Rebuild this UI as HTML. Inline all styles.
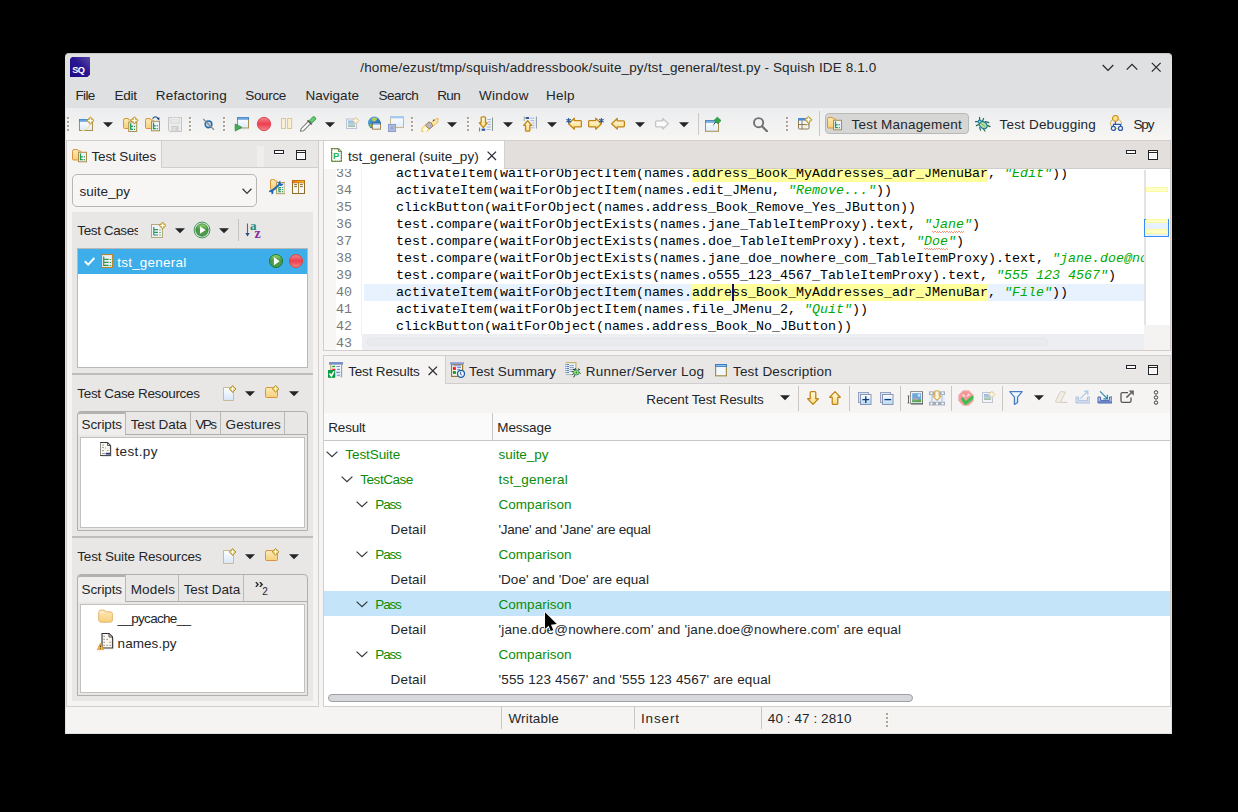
<!DOCTYPE html>
<html><head><meta charset="utf-8"><title>Squish IDE</title><style>
html,body{margin:0;padding:0;background:#000;}
body{width:1238px;height:812px;position:relative;overflow:hidden;font-family:"Liberation Sans",sans-serif;font-size:13.5px;color:#232629;}
div,svg{position:absolute;box-sizing:border-box;}
.t{white-space:pre;}
</style></head><body>
<svg width="0" height="0" style="position:absolute"><defs>
<linearGradient id="gFold" x1="0" y1="0" x2="0" y2="1"><stop offset="0" stop-color="#fdeab8"/><stop offset="1" stop-color="#f7cf7a"/></linearGradient>
<linearGradient id="gFoldH" x1="0" y1="0" x2="1" y2="0"><stop offset="0" stop-color="#fbd98c"/><stop offset="1" stop-color="#fdf0cc"/></linearGradient>
<linearGradient id="gWin" x1="0" y1="0" x2="0" y2="1"><stop offset="0" stop-color="#ffffff"/><stop offset="1" stop-color="#dcecfb"/></linearGradient>
<linearGradient id="gArr" x1="0" y1="0" x2="0" y2="1"><stop offset="0" stop-color="#fffbe6"/><stop offset="1" stop-color="#fbdc7c"/></linearGradient>
<linearGradient id="gRed" x1="0" y1="0" x2="0" y2="1"><stop offset="0" stop-color="#ee8c8c"/><stop offset="0.5" stop-color="#f03c50"/><stop offset="1" stop-color="#ee8888"/></linearGradient>
<linearGradient id="gGrn" x1="0" y1="0" x2="0" y2="1"><stop offset="0" stop-color="#9ad86a"/><stop offset="0.45" stop-color="#4a9a4a"/><stop offset="1" stop-color="#4c9c4c"/></linearGradient>
<linearGradient id="gSq" x1="0" y1="0" x2="0" y2="1"><stop offset="0" stop-color="#ffffff"/><stop offset="1" stop-color="#b4daf4"/></linearGradient>
<linearGradient id="gSqLogo" x1="0" y1="1" x2="1" y2="0"><stop offset="0" stop-color="#1c0a86"/><stop offset="0.55" stop-color="#2a1690"/><stop offset="1" stop-color="#5a4aa8"/></linearGradient>
<linearGradient id="gTbl" x1="0" y1="0" x2="1" y2="0"><stop offset="0" stop-color="#f08000"/><stop offset="1" stop-color="#ffc820"/></linearGradient>
<linearGradient id="gDoc" x1="0" y1="0" x2="0" y2="1"><stop offset="0" stop-color="#ffffff"/><stop offset="1" stop-color="#d6e6f8"/></linearGradient>
<linearGradient id="gGlobe" x1="0" y1="0" x2="1" y2="1"><stop offset="0" stop-color="#5ab0e0"/><stop offset="1" stop-color="#1a5a9a"/></linearGradient>
<linearGradient id="gImg" x1="0" y1="0" x2="0" y2="1"><stop offset="0" stop-color="#7aa8e0"/><stop offset="0.6" stop-color="#a8c8d8"/><stop offset="1" stop-color="#8ab078"/></linearGradient>
</defs></svg>
<div style="left:65px;top:53px;width:1107px;height:681px;background:#dee0e2;border-radius:4px 4px 0 0;border-top:1px solid #c3c5c7;"></div>
<svg style="left:70px;top:57px;" width="20" height="20" viewBox="0 0 20 20"><path d="M2 0H20V17.5L17.5 20H0V2Z" fill="url(#gSqLogo)"/><text x="2.2" y="16.2" font-family="Liberation Sans" font-weight="bold" font-size="9.2" fill="#fff" letter-spacing="-.5">SQ</text></svg>
<div class="t" style="left:360.3px;top:57.52px;line-height:20px;font-size:13.5px;color:#232629;letter-spacing:0.135px;">/home/ezust/tmp/squish/addressbook/suite_py/tst_general/test.py - Squish IDE 8.1.0</div>
<svg style="left:1102px;top:61.6px;" width="12" height="12" viewBox="0 0 12 12"><path d="M0.7 3L6 8.3L11.3 3" fill="none" stroke="#232629" stroke-width="1.2"/></svg>
<svg style="left:1126px;top:60.8px;" width="12" height="12" viewBox="0 0 12 12"><path d="M0.7 8.6L6 3.3L11.3 8.6" fill="none" stroke="#232629" stroke-width="1.2"/></svg>
<svg style="left:1150px;top:61px;" width="12" height="12" viewBox="0 0 12 12"><path d="M1.8 1.8L10.6 10.6M10.6 1.8L1.8 10.6" fill="none" stroke="#232629" stroke-width="1.2"/></svg>
<div class="t" style="left:75.4px;top:86.02px;line-height:20px;font-size:13.5px;color:#232629;letter-spacing:-0.622px;">File</div>
<div class="t" style="left:114.6px;top:86.02px;line-height:20px;font-size:13.5px;color:#232629;letter-spacing:-0.289px;">Edit</div>
<div class="t" style="left:155.8px;top:86.02px;line-height:20px;font-size:13.5px;color:#232629;letter-spacing:0.185px;">Refactoring</div>
<div class="t" style="left:245.3px;top:86.02px;line-height:20px;font-size:13.5px;color:#232629;letter-spacing:-0.356px;">Source</div>
<div class="t" style="left:305.4px;top:86.02px;line-height:20px;font-size:13.5px;color:#232629;letter-spacing:0.043px;">Navigate</div>
<div class="t" style="left:378.4px;top:86.02px;line-height:20px;font-size:13.5px;color:#232629;letter-spacing:-0.496px;">Search</div>
<div class="t" style="left:437.2px;top:86.02px;line-height:20px;font-size:13.5px;color:#232629;letter-spacing:-0.583px;">Run</div>
<div class="t" style="left:479px;top:86.02px;line-height:20px;font-size:13.5px;color:#232629;letter-spacing:0.277px;">Window</div>
<div class="t" style="left:546px;top:86.02px;line-height:20px;font-size:13.5px;color:#232629;letter-spacing:0.278px;">Help</div>
<div style="left:66px;top:108px;width:1105px;height:625px;background:#f5f4f3;"></div>
<div style="left:66px;top:108px;width:1105px;height:32px;background:linear-gradient(#ecedef,#f7f6f4);"></div>
<div style="left:66px;top:140px;width:1105px;height:1px;background:#d2ccc7;"></div>
<div style="left:67px;top:117px;width:2px;height:2px;background:#ada294;box-shadow:1px 1px 0 #fbfaf9;"></div>
<div style="left:67px;top:121px;width:2px;height:2px;background:#ada294;box-shadow:1px 1px 0 #fbfaf9;"></div>
<div style="left:67px;top:125px;width:2px;height:2px;background:#ada294;box-shadow:1px 1px 0 #fbfaf9;"></div>
<div style="left:67px;top:129px;width:2px;height:2px;background:#ada294;box-shadow:1px 1px 0 #fbfaf9;"></div>
<svg style="left:78px;top:116px;" width="16" height="16" viewBox="0 0 16 16"><g opacity="1"><rect x="1.5" y="3.5" width="13" height="11" fill="url(#gWin)" stroke="#a88e50" stroke-width="1"/><rect x="1" y="3" width="14" height="2.6" fill="#3d86cf"/><rect x="2" y="3.8" width="12" height="0.8" fill="#9cc8f0" opacity=".8"/></g><path d="M4 14.3Q11 14 12.2 7" fill="none" stroke="#f4e2a8" stroke-width="1.3"/><g opacity="1"><path d="M12.4 0.9999999999999996L16.0 4.6L12.4 8.2L8.8 4.6Z" fill="#dcc05c" stroke="#b8962a" stroke-width="1" stroke-linejoin="round"/><path d="M12.4 2.3V6.8999999999999995M10.100000000000001 4.6H14.7" stroke="#fffef4" stroke-width="1.05"/></g></svg>
<svg style="left:103px;top:122px;" width="10" height="6" viewBox="0 0 10 6"><path d="M0 0.2h10l-5 5z" fill="#232629"/></svg>
<svg style="left:123px;top:116px;" width="16" height="16" viewBox="0 0 16 16"><path d="M0.5 4.2Q0.5 2.5 2 2.5H4.95Q5.58 2.5 6.12 4H7.8Q8.5 4 8.5 5V11.5Q8.5 12.5 7.5 12.5H1.5Q0.5 12.5 0.5 11.5Z" fill="url(#gFold)" stroke="#d9953c" stroke-width="1"/><rect x="5.7" y="6.0" width="8" height="9.5" fill="#eef2fa" stroke="#a8904a" stroke-width="1"/><path d="M7.7 7.3V13.4H10.0M7.7 10.45H10.0" fill="none" stroke="#1e9a4e" stroke-width="1.25"/><rect x="10.899999999999999" y="9.85" width="1.2" height="1.2" fill="#1e9a4e"/><rect x="10.899999999999999" y="12.8" width="1.2" height="1.2" fill="#1e9a4e"/><g opacity="1"><path d="M11.4 0.8000000000000003L15.0 4.4L11.4 8.0L7.800000000000001 4.4Z" fill="#dcc05c" stroke="#b8962a" stroke-width="1" stroke-linejoin="round"/><path d="M11.4 2.1000000000000005V6.7M9.100000000000001 4.4H13.7" stroke="#fffef4" stroke-width="1.05"/></g></svg>
<svg style="left:145px;top:116px;" width="16" height="16" viewBox="0 0 16 16"><path d="M0.5 4.2Q0.5 2.5 2 2.5H4.95Q5.58 2.5 6.12 4H7.8Q8.5 4 8.5 5V11.5Q8.5 12.5 7.5 12.5H1.5Q0.5 12.5 0.5 11.5Z" fill="url(#gFold)" stroke="#d9953c" stroke-width="1"/><rect x="6.5" y="5.3" width="8" height="9.5" fill="#eef2fa" stroke="#a8904a" stroke-width="1"/><path d="M8.5 6.6V12.700000000000001H10.8M8.5 9.75H10.8" fill="none" stroke="#1e9a4e" stroke-width="1.25"/><rect x="11.7" y="9.15" width="1.2" height="1.2" fill="#1e9a4e"/><rect x="11.7" y="12.100000000000001" width="1.2" height="1.2" fill="#1e9a4e"/><path d="M7.6 2.6Q10.5 -.8 13.2 2.6" fill="none" stroke="#2a5a98" stroke-width="1.3"/><path d="M11.6 2.2L14.6 1.4L14.2 4.4Z" fill="#1c3e7a"/></svg>
<svg style="left:167px;top:116px;" width="16" height="16" viewBox="0 0 16 16"><path d="M1.5 1.5H14.5V15.5H2.5L1.5 14.5Z" fill="#ececec" stroke="#c4c4c4" stroke-width="1" stroke-linejoin="round"/><rect x="4" y="1.5" width="8" height="5.5" fill="#f6f6f6" stroke="#cccccc" stroke-width=".8"/><path d="M5.2 3.3H10.8M5.2 5H10.8" stroke="#d4d4d4" stroke-width=".8"/><rect x="5" y="10.5" width="6" height="5" fill="#e0e0e0" stroke="#c4c4c4" stroke-width=".8"/><rect x="8.6" y="11.6" width="1.2" height="3" fill="#c8c8c8"/></svg>
<div style="left:189px;top:117px;width:2px;height:2px;background:#ada294;box-shadow:1px 1px 0 #fbfaf9;"></div>
<div style="left:189px;top:121px;width:2px;height:2px;background:#ada294;box-shadow:1px 1px 0 #fbfaf9;"></div>
<div style="left:189px;top:125px;width:2px;height:2px;background:#ada294;box-shadow:1px 1px 0 #fbfaf9;"></div>
<div style="left:189px;top:129px;width:2px;height:2px;background:#ada294;box-shadow:1px 1px 0 #fbfaf9;"></div>
<svg style="left:201px;top:116px;" width="16" height="16" viewBox="0 0 16 16"><circle cx="7.5" cy="8.3" r="3.3" fill="#c4d8ea" stroke="#1e6eae" stroke-width="1.6"/><path d="M2.2 3L13 13.8" stroke="#8c8c8c" stroke-width="1.3"/></svg>
<div style="left:223px;top:117px;width:2px;height:2px;background:#ada294;box-shadow:1px 1px 0 #fbfaf9;"></div>
<div style="left:223px;top:121px;width:2px;height:2px;background:#ada294;box-shadow:1px 1px 0 #fbfaf9;"></div>
<div style="left:223px;top:125px;width:2px;height:2px;background:#ada294;box-shadow:1px 1px 0 #fbfaf9;"></div>
<div style="left:223px;top:129px;width:2px;height:2px;background:#ada294;box-shadow:1px 1px 0 #fbfaf9;"></div>
<svg style="left:234px;top:116px;" width="16" height="16" viewBox="0 0 16 16"><g opacity="1"><rect x="3.5" y="1.5" width="11" height="10.5" fill="url(#gWin)" stroke="#a88e50" stroke-width="1"/><rect x="3" y="1" width="12" height="2.6" fill="#3d86cf"/><rect x="4" y="1.8" width="10" height="0.8" fill="#9cc8f0" opacity=".8"/></g><path d="M3.5 12.6H14" stroke="#c9c9c9" stroke-width=".8"/><path d="M1.2 8L8 11.4L1.2 15Z" fill="#4aa85a" stroke="#2e8a44" stroke-width=".8" stroke-linejoin="round"/></svg>
<svg style="left:256px;top:116px;" width="16" height="16" viewBox="0 0 16 16"><circle cx="8" cy="8" r="6.7" fill="url(#gRed)" stroke="#de4452" stroke-width="0.9"/></svg>
<svg style="left:279px;top:116px;" width="16" height="16" viewBox="0 0 16 16"><rect x="2.5" y="2.5" width="4" height="10" fill="#fbf0d2" stroke="#d9c794" stroke-width="1"/><rect x="8.6" y="2.5" width="4" height="10" fill="#fbf0d2" stroke="#d9c794" stroke-width="1"/></svg>
<svg style="left:299px;top:116px;" width="18" height="16" viewBox="0 0 18 16"><path d="M1.4 15.2L2.2 12.6L9.6 5.2L11.8 7.4L4.4 14.8Z" fill="#fff" stroke="#7e7e7e" stroke-width="1.1" stroke-linejoin="round"/><path d="M8.6 4.2L12.8 8.4" stroke="#5a5a5a" stroke-width="1.6"/><path d="M10.4 4.6L13.4 1.2Q15 -.2 16.2 1.4Q17.4 2.8 16 4.2L12.8 7Z" fill="#62cc6e" stroke="#3c9a4c" stroke-width=".9"/></svg>
<svg style="left:325px;top:122px;" width="10" height="6" viewBox="0 0 10 6"><path d="M0 0.2h10l-5 5z" fill="#232629"/></svg>
<svg style="left:345px;top:116px;" width="16" height="16" viewBox="0 0 16 16"><g opacity=".75"><rect x="1.5" y="3" width="10" height="9.5" fill="#f2f4f8" stroke="#aab4c8" stroke-width="1"/><rect x="3" y="4.5" width="7" height="6.5" fill="url(#gImg)"/></g><g opacity="0.9"><path d="M10.8 1.1999999999999997L14.200000000000001 4.6L10.8 8.0L7.4 4.6Z" fill="#eadcae" stroke="#e0cf9c" stroke-width="1" stroke-linejoin="round"/><path d="M10.8 2.5V6.7M8.700000000000001 4.6H12.9" stroke="#fffef4" stroke-width="1.05"/></g></svg>
<svg style="left:367px;top:116px;" width="16" height="16" viewBox="0 0 16 16"><circle cx="7.2" cy="6.8" r="6.2" fill="url(#gGlobe)"/><path d="M5 2.2Q8 .8 10.4 2.6Q9.4 5.2 6.8 5.6Q4.6 5.2 5 2.2Z" fill="#b8c85a"/><path d="M2.4 8Q4.2 7.4 5 9.6Q4.4 11.6 3.2 11Z" fill="#8ab85a"/><g opacity="1"><rect x="5.5" y="6.7" width="8" height="6.5" fill="url(#gWin)" stroke="#a88a4a" stroke-width="1"/><rect x="5" y="6.2" width="9" height="2.2" fill="#2c6cb4"/><rect x="6" y="7.0" width="7" height="0.8" fill="#9cc8f0" opacity=".8"/></g></svg>
<svg style="left:388px;top:116px;" width="16" height="16" viewBox="0 0 16 16"><rect x="2.5" y="0.5" width="13" height="11" fill="url(#gWin)" stroke="#cdb885" stroke-width="1"/><rect x="2" y="0" width="14" height="2.4" fill="#a8caec"/><rect x="0.5" y="8.5" width="7" height="7" fill="#b4bedc" stroke="#8a9ccc" stroke-width="1"/><rect x="2.4" y="10.4" width="3.2" height="3.2" fill="#9aa8cc"/></svg>
<div style="left:411px;top:117px;width:2px;height:2px;background:#ada294;box-shadow:1px 1px 0 #fbfaf9;"></div>
<div style="left:411px;top:121px;width:2px;height:2px;background:#ada294;box-shadow:1px 1px 0 #fbfaf9;"></div>
<div style="left:411px;top:125px;width:2px;height:2px;background:#ada294;box-shadow:1px 1px 0 #fbfaf9;"></div>
<div style="left:411px;top:129px;width:2px;height:2px;background:#ada294;box-shadow:1px 1px 0 #fbfaf9;"></div>
<svg style="left:421px;top:116px;" width="18" height="16" viewBox="0 0 18 16"><path d="M0.9 12.4L4.8 8.6L8.6 13L5 16H0.9Z" fill="#fff6b8" stroke="#f0b030" stroke-width=".8" stroke-linejoin="round"/><path d="M2.6 15.4L6.6 12.4L5.2 15.8Z" fill="#fff"/><path d="M3.4 14.6L7 11.4" stroke="#fff" stroke-width="2"/><path d="M8.8 8.2L13.6 3.4L17 2.2L16.8 5.8L12 10.8Z" fill="#fde79c" stroke="#f0a030" stroke-width="1" stroke-linejoin="round" stroke-dasharray="1.1 .5"/><circle cx="12.7" cy="4.3" r=".9" fill="#2a5ab0"/><rect x="5.4" y="6.6" width="5.8" height="5.6" rx="1.6" transform="rotate(42 8.3 9.4)" fill="#b9b4c6" stroke="#9a7838" stroke-width=".9"/></svg>
<svg style="left:447px;top:122px;" width="10" height="6" viewBox="0 0 10 6"><path d="M0 0.2h10l-5 5z" fill="#232629"/></svg>
<div style="left:467px;top:117px;width:2px;height:2px;background:#ada294;box-shadow:1px 1px 0 #fbfaf9;"></div>
<div style="left:467px;top:121px;width:2px;height:2px;background:#ada294;box-shadow:1px 1px 0 #fbfaf9;"></div>
<div style="left:467px;top:125px;width:2px;height:2px;background:#ada294;box-shadow:1px 1px 0 #fbfaf9;"></div>
<div style="left:467px;top:129px;width:2px;height:2px;background:#ada294;box-shadow:1px 1px 0 #fbfaf9;"></div>
<svg style="left:478px;top:116px;" width="16" height="16" viewBox="0 0 16 16"><path d="M9.4 3.5H13M10 6H13M10 8.5H13M8.6 11H13M8.6 13.5H13" stroke="#a8b4dc" stroke-width="1"/><path d="M14.5 1.5V15" stroke="#8a9a8a" stroke-width="1"/><path d="M1.6 11.5V15.5" stroke="#5a78b8" stroke-width="1"/><rect x="3.6" y="12.6" width="3.6" height="2.2" fill="#2a5aa8"/><path d="M5.3 11.6L1.2999999999999998 6.799999999999999H3.1380000000000003V1.8Q3.1380000000000003 0.8 4.138 0.8H6.462Q7.462 0.8 7.462 1.8V6.799999999999999H9.3Z" fill="url(#gArr)" stroke="#c0861a" stroke-width="1.3" stroke-linejoin="round" opacity="1"/></svg>
<svg style="left:503px;top:122px;" width="10" height="6" viewBox="0 0 10 6"><path d="M0 0.2h10l-5 5z" fill="#232629"/></svg>
<svg style="left:522px;top:116px;" width="16" height="16" viewBox="0 0 16 16"><path d="M7.6 2.2H12.4M8.6 4.6H12.4M10.4 7H12.4M10.4 9.4H12.4M8.6 11.8H12.4" stroke="#a8b4dc" stroke-width="1"/><path d="M14.4 0.5V12.6" stroke="#8a9aaa" stroke-width="1"/><path d="M2.2 0.5V5" stroke="#9aa88a" stroke-width="1"/><rect x="3.6" y="1" width="3.4" height="2" fill="#2a5aa8"/><path d="M5.7 4.8L1.7 9.42H3.5380000000000003V14.200000000000001Q3.5380000000000003 15.200000000000001 4.538 15.200000000000001H6.862Q7.862 15.200000000000001 7.862 14.200000000000001V9.42H9.700000000000001Z" fill="url(#gArr)" stroke="#c0861a" stroke-width="1.3" stroke-linejoin="round" opacity="1"/></svg>
<svg style="left:547px;top:122px;" width="10" height="6" viewBox="0 0 10 6"><path d="M0 0.2h10l-5 5z" fill="#232629"/></svg>
<svg style="left:566px;top:116px;" width="16" height="16" viewBox="0 0 16 16"><path d="M2.6 7.800000000000001L8.3 2.3V4.7H14.4Q15.4 4.7 15.4 5.7V9.9Q15.4 10.9 14.4 10.9H8.3V13.3Z" fill="url(#gArr)" stroke="#c0861a" stroke-width="1.3" stroke-linejoin="round"/><path d="M2.6 1.9999999999999996V7.199999999999999M0.3999999999999999 3.1999999999999997L4.800000000000001 6.0M0.3999999999999999 6.0L4.800000000000001 3.1999999999999997" stroke="#2c5e9e" stroke-width="1.1"/></svg>
<svg style="left:588px;top:116px;" width="16" height="16" viewBox="0 0 16 16"><path d="M13.4 7.800000000000001L7.7 2.3V4.7H1.6Q0.6 4.7 0.6 5.7V9.9Q0.6 10.9 1.6 10.9H7.7V13.3Z" fill="url(#gArr)" stroke="#c0861a" stroke-width="1.3" stroke-linejoin="round"/><path d="M13.4 1.9999999999999996V7.199999999999999M11.2 3.1999999999999997L15.600000000000001 6.0M11.2 6.0L15.600000000000001 3.1999999999999997" stroke="#2c5e9e" stroke-width="1.1"/></svg>
<svg style="left:610px;top:116px;" width="16" height="16" viewBox="0 0 16 16"><path d="M1.6 7.8L7.3 2.5V4.8H13.4Q14.4 4.8 14.4 5.8V9.8Q14.4 10.8 13.4 10.8H7.3V13.100000000000001Z" fill="url(#gArr)" stroke="#c0861a" stroke-width="1.3" stroke-linejoin="round"/></svg>
<svg style="left:635px;top:122px;" width="10" height="6" viewBox="0 0 10 6"><path d="M0 0.2h10l-5 5z" fill="#232629"/></svg>
<svg style="left:654px;top:116px;" width="16" height="16" viewBox="0 0 16 16"><path d="M14.4 7.8L8.7 2.5V4.8H2.6Q1.6 4.8 1.6 5.8V9.8Q1.6 10.8 2.6 10.8H8.7V13.100000000000001Z" fill="#fbfbfb" stroke="#c4c4c4" stroke-width="1.3" stroke-linejoin="round"/></svg>
<svg style="left:679px;top:122px;" width="10" height="6" viewBox="0 0 10 6"><path d="M0 0.2h10l-5 5z" fill="#232629"/></svg>
<div style="left:698px;top:113px;width:1px;height:22px;background:#c9c8c7;"></div>
<svg style="left:705px;top:116px;" width="16" height="16" viewBox="0 0 16 16"><g opacity="1"><rect x="0.5" y="4.7" width="13" height="10.6" fill="url(#gWin)" stroke="#a88e50" stroke-width="1"/><rect x="0" y="4.2" width="14" height="2.4" fill="#3d86cf"/><rect x="1" y="5.0" width="12" height="0.8" fill="#9cc8f0" opacity=".8"/></g><path d="M8.6 8.6L10.6 6.2" stroke="#333" stroke-width="1"/><path d="M9.2 4.2L12.4 1.2L16 4.6L12.8 7.8Z" fill="#2fa84a" stroke="#1c8a3a" stroke-width=".8" stroke-linejoin="round"/><path d="M8.4 10.4Q8 9 9 8.4" stroke="#a8c8e8" stroke-width="1" fill="none"/></svg>
<svg style="left:752px;top:116px;" width="16" height="16" viewBox="0 0 16 16"><circle cx="6.6" cy="6.7" r="4.6" fill="none" stroke="#707070" stroke-width="1.9"/><path d="M10 10.2L15 15.2" stroke="#707070" stroke-width="2.2" stroke-linecap="round"/></svg>
<div style="left:786px;top:117px;width:2px;height:2px;background:#ada294;box-shadow:1px 1px 0 #fbfaf9;"></div>
<div style="left:786px;top:121px;width:2px;height:2px;background:#ada294;box-shadow:1px 1px 0 #fbfaf9;"></div>
<div style="left:786px;top:125px;width:2px;height:2px;background:#ada294;box-shadow:1px 1px 0 #fbfaf9;"></div>
<div style="left:786px;top:129px;width:2px;height:2px;background:#ada294;box-shadow:1px 1px 0 #fbfaf9;"></div>
<svg style="left:797px;top:116px;" width="16" height="16" viewBox="0 0 16 16"><rect x="1.5" y="2.5" width="10.5" height="10.5" fill="#f4f6fa" stroke="#8a7a4a" stroke-width="1" rx="1"/><rect x="1" y="2" width="11.5" height="2.6" fill="#4a8ad0"/><path d="M5 4.6V13M1.5 8.6H12" stroke="#8a7a4a" stroke-width="1"/><path d="M6.5 11.6L10.6 8.4" stroke="#f4e2a8" stroke-width="1"/><g opacity="1"><path d="M11.4 0.2999999999999998L14.9 3.8L11.4 7.3L7.9 3.8Z" fill="#dcc05c" stroke="#b8962a" stroke-width="1" stroke-linejoin="round"/><path d="M11.4 1.5999999999999999V6.0M9.200000000000001 3.8H13.6" stroke="#fffef4" stroke-width="1.05"/></g></svg>
<div style="left:819px;top:111px;width:1px;height:25px;background:#c9c8c7;"></div>
<div style="left:825px;top:113px;width:144px;height:21px;background:#d6d6d5;border:1px solid #b9b9b8;border-radius:4px;"></div>
<svg style="left:827px;top:116px;" width="16" height="16" viewBox="0 0 16 16"><path d="M0.5 3.2Q0.5 1.5 2 1.5H5.2250000000000005Q5.89 1.5 6.460000000000001 3H8.3Q9.0 3 9.0 4V11.0Q9.0 12.0 8.0 12.0H1.5Q0.5 12.0 0.5 11.0Z" fill="url(#gFold)" stroke="#d9953c" stroke-width="1"/><rect x="6.5" y="4.3" width="8" height="9.5" fill="#eef2fa" stroke="#a8904a" stroke-width="1"/><path d="M8.5 5.6V11.700000000000001H10.8M8.5 8.75H10.8" fill="none" stroke="#1e9a4e" stroke-width="1.25"/><rect x="11.7" y="8.15" width="1.2" height="1.2" fill="#1e9a4e"/><rect x="11.7" y="11.100000000000001" width="1.2" height="1.2" fill="#1e9a4e"/></svg>
<div class="t" style="left:851.6px;top:115.02px;line-height:20px;font-size:13.5px;color:#232629;letter-spacing:0.199px;">Test Management</div>
<svg style="left:975px;top:116px;" width="16" height="16" viewBox="0 0 16 16"><g stroke="#1e6e4e" stroke-width="1.2" stroke-linecap="round"><path d="M4.6 1.4V4.4M8.6 2.6L7.6 4.8M0.4 5.7H3.4M1.4 9.6L3.6 8.6M4.6 11.6L5.6 14.2M8.6 13.2L10 15M10.6 5.6L13.8 6.6M12.6 9.4L15 10.6"/></g><ellipse cx="8.2" cy="9" rx="4.3" ry="3.2" transform="rotate(38 8.2 9)" fill="#b4dc9c" stroke="#1a7a9e" stroke-width="1.3"/><circle cx="4.7" cy="5.6" r="1.5" fill="#d8f0c0" stroke="#1a7a9e" stroke-width="1.1"/><path d="M6.4 7.6L10 10.6" stroke="#7ab86a" stroke-width="1"/></svg>
<div class="t" style="left:999.5px;top:115.02px;line-height:20px;font-size:13.5px;color:#232629;letter-spacing:0.190px;">Test Debugging</div>
<svg style="left:1109px;top:115px;" width="16" height="17" viewBox="0 0 16 17"><path d="M3.4 4.4Q-.4 8 3 11.8M9.4 4.4Q14.4 7 11.6 11.6" fill="none" stroke="#c8a83c" stroke-width=".9"/><path d="M4.4 13.4H10.6" stroke="#e8c84a" stroke-width="1"/><circle cx="6.4" cy="3.4" r="2.9" fill="#fde08a" stroke="#c8981c" stroke-width="1.2"/><path d="M6.4 6.8V9.4M4.4 11.4V9.4H11.5V11.4" fill="none" stroke="#2a5aa8" stroke-width="1.2"/><circle cx="4.4" cy="13.4" r="2" fill="#fff" stroke="#2a5aa8" stroke-width="1.3"/><circle cx="11.5" cy="13.4" r="2" fill="#fff" stroke="#2a5aa8" stroke-width="1.3"/></svg>
<div class="t" style="left:1133.4px;top:115.02px;line-height:20px;font-size:13.5px;color:#232629;letter-spacing:-1.033px;">Spy</div>
<div style="left:66px;top:140px;width:253px;height:567px;background:#f5f4f3;border:1px solid #d3cecb;"></div>
<div style="left:161px;top:141px;width:157px;height:27px;background:#e8e7e6;border-bottom:1px solid #d3cecb;border-left:1px solid #d3cecb;"></div>
<div style="left:257px;top:146px;width:7px;height:21px;background:#efeeed;"></div>
<svg style="left:72px;top:148px;" width="16" height="16" viewBox="0 0 16 16"><path d="M0.5 3.2Q0.5 1.5 2 1.5H5.2250000000000005Q5.89 1.5 6.460000000000001 3H8.3Q9.0 3 9.0 4V11.0Q9.0 12.0 8.0 12.0H1.5Q0.5 12.0 0.5 11.0Z" fill="url(#gFold)" stroke="#d9953c" stroke-width="1"/><rect x="6.5" y="4.3" width="8" height="9.5" fill="#eef2fa" stroke="#a8904a" stroke-width="1"/><path d="M8.5 5.6V11.700000000000001H10.8M8.5 8.75H10.8" fill="none" stroke="#1e9a4e" stroke-width="1.25"/><rect x="11.7" y="8.15" width="1.2" height="1.2" fill="#1e9a4e"/><rect x="11.7" y="11.100000000000001" width="1.2" height="1.2" fill="#1e9a4e"/></svg>
<div class="t" style="left:91.4px;top:146.92px;line-height:20px;font-size:13.5px;color:#232629;letter-spacing:-0.123px;">Test Suites</div>
<svg style="left:274px;top:150px;" width="10" height="5" viewBox="0 0 10 5"><rect x="-1" y="-1" width="12" height="6" fill="#fff" opacity=".6" rx="1"/><rect x="0.5" y="0.5" width="9" height="3" fill="#fff" stroke="#1f2226" stroke-width="1"/></svg>
<svg style="left:296px;top:150px;" width="10" height="10" viewBox="0 0 10 10"><rect x="-1" y="-1" width="12" height="12" fill="#fff" opacity=".6" rx="1"/><rect x="0.5" y="0.5" width="9" height="9" fill="none" stroke="#1f2226" stroke-width="1"/><rect x="1" y="1" width="8" height="1" fill="#fff"/><rect x="1" y="2" width="8" height="1" fill="#1f2226"/><rect x="1.5" y="3.5" width="7" height="5" fill="none" stroke="#fff" stroke-width="1"/></svg>
<div style="left:72px;top:174px;width:185px;height:33px;background:#f7f6f5;border:1px solid #b8b6b4;border-radius:5px;"></div>
<div class="t" style="left:79.4px;top:182.42px;line-height:20px;font-size:13.5px;color:#232629;letter-spacing:0.043px;">suite_py</div>
<svg style="left:242px;top:188px;" width="10" height="7" viewBox="0 0 10 7"><path d="M0.6 0.8L5 5.4L9.4 0.8" fill="none" stroke="#34383c" stroke-width="1.3"/></svg>
<svg style="left:269px;top:179px;" width="16" height="16" viewBox="0 0 16 16"><path d="M1.5 2.0Q1.5 0.3 3 0.3H5.18Q5.712 0.3 6.168 1.8H7.3999999999999995Q8.1 1.8 8.1 2.8V9.3Q8.1 10.3 7.1 10.3H2.5Q1.5 10.3 1.5 9.3Z" fill="url(#gFold)" stroke="#d9953c" stroke-width="1"/><rect x="7.6" y="3.5" width="8.4" height="11.2" fill="#eef2fa" stroke="#b09a5c" stroke-width="1"/><path d="M9.9 8V13.2M9.9 8.6H12.2M9.9 10.6H12.2M9.9 12.7H12.2" fill="none" stroke="#2a9a5a" stroke-width="1.1"/><path d="M13.7 8V9.1M13.7 10V11.1M13.7 12.1V13.2" stroke="#2a9a5a" stroke-width="1.1"/><path d="M2.6 12.2L11.2 4.8" stroke="#2468b4" stroke-width="2"/><path d="M9.4 5.2Q8.8 2.6 11.6 1.8L11.2 3.6L12.6 4.9L14.4 4.2Q14.2 6.8 11.4 6.9Z" fill="#2468b4"/><path d="M4.4 12.4Q5 15 2.4 15.8L2.8 14L1.4 12.8L-.2 13.4Q0 10.8 2.6 10.6Z" fill="#2468b4"/></svg>
<svg style="left:292px;top:179px;" width="13" height="16" viewBox="0 0 13 16"><rect x="0.5" y="1.7" width="12" height="12.8" fill="#f4f8fc" stroke="#8a6e28" stroke-width="1"/><rect x="0.3" y="1.5" width="12.4" height="2.4" fill="url(#gTbl)" stroke="#b05a10" stroke-width=".6"/><path d="M6.5 4V14.5" stroke="#a88a3a" stroke-width="1"/><path d="M2.2 5.6H5M2.2 7.6H5M8 5.6H10.8M8 7.6H10.8" stroke="#8a6e28" stroke-width="1"/></svg>
<div style="left:72px;top:212px;width:241px;height:489px;background:#e8e7e6;"></div>
<div class="t" style="left:77.3px;top:221.02px;line-height:20px;font-size:13.5px;color:#232629;letter-spacing:-0.387px;width:60.4px;overflow:hidden;">Test Cases</div>
<svg style="left:150px;top:222px;" width="16" height="16" viewBox="0 0 16 16"><rect x="1.5" y="2.5" width="11" height="13" fill="#f0f2f8" stroke="#b8a878" stroke-width="1"/><path d="M3.8 5V13H8M3.8 7.6H8M3.8 10.3H8" fill="none" stroke="#2a9a5a" stroke-width="1.2"/><path d="M10 7.6V8.6M10 10V11M10 12.6V13.4" stroke="#2a9a5a" stroke-width="1.2"/><g opacity="1"><path d="M12.6 0.10000000000000009L16.0 3.5L12.6 6.9L9.2 3.5Z" fill="#dcc05c" stroke="#b8962a" stroke-width="1" stroke-linejoin="round"/><path d="M12.6 1.4000000000000001V5.6000000000000005M10.5 3.5H14.7" stroke="#fffef4" stroke-width="1.05"/></g></svg>
<svg style="left:175px;top:228px;" width="10" height="6" viewBox="0 0 10 6"><path d="M0 0.2h10l-5 5z" fill="#232629"/></svg>
<svg style="left:193px;top:221px;" width="18" height="18" viewBox="0 0 18 18"><circle cx="9" cy="9" r="7.9" fill="#eef6ee" stroke="#2e8a44" stroke-width="0.9"/><circle cx="9" cy="9" r="6.2" fill="url(#gGrn)" stroke="#2a7a3a" stroke-width=".8"/><path d="M7 5.2V12.8L12.6 9Z" fill="#fff"/></svg>
<svg style="left:219px;top:228px;" width="10" height="6" viewBox="0 0 10 6"><path d="M0 0.2h10l-5 5z" fill="#232629"/></svg>
<div style="left:238px;top:219px;width:1px;height:22px;background:#c4c3c2;"></div>
<svg style="left:245px;top:222px;" width="17" height="16" viewBox="0 0 17 16"><path d="M2.5 1.5V13" stroke="#3a6ea8" stroke-width="1.1"/><path d="M0.3 11L2.5 14.4L4.7 11Z" fill="#2a4e88"/><text x="5" y="7.8" font-family="Liberation Serif" font-weight="bold" font-size="13" fill="#1a8a7a">a</text><text x="9.6" y="15.9" font-family="Liberation Serif" font-weight="bold" font-size="14" fill="#8a2a9a">z</text></svg>
<div style="left:77px;top:248px;width:231px;height:120px;background:#fff;border:1px solid #b9b8b7;"></div>
<div style="left:78px;top:249px;width:229px;height:25px;background:#3daee9;"></div>
<svg style="left:84px;top:257px;" width="11" height="9" viewBox="0 0 11 9"><path d="M0.8 4.2L4.2 7.6L10.4 1" fill="none" stroke="#fff" stroke-width="2"/></svg>
<svg style="left:101px;top:254px;" width="12" height="14" viewBox="0 0 12 14"><rect x="0.5" y="0.5" width="11" height="13" fill="#eef0f8" stroke="#b8882c" stroke-width="1.2"/><path d="M2.7 2.4V11.4H7.6M2.7 5.4H7.6M2.7 8.3H7.6" fill="none" stroke="#2a9a4a" stroke-width="1.2"/><path d="M9.3 5V6M9.3 7.9V8.9M9.3 10.9V11.9" stroke="#2a9a4a" stroke-width="1.2"/></svg>
<div class="t" style="left:117.2px;top:252.72px;line-height:20px;font-size:13.5px;color:#fff;letter-spacing:0.230px;">tst_general</div>
<svg style="left:269px;top:254px;" width="14" height="14" viewBox="0 0 14 14"><circle cx="7" cy="7" r="6.5" fill="url(#gGrn)" stroke="#1f7a30" stroke-width="1"/><path d="M4.9 2.9V11.3L10.6 7.3Z" fill="#fff"/></svg>
<svg style="left:289px;top:254px;" width="14" height="14" viewBox="0 0 14 14"><circle cx="7" cy="7" r="6.5" fill="url(#gRed)" stroke="#e2402e" stroke-width="0.9"/></svg>
<div style="left:72px;top:373.2px;width:241px;height:1.5px;background:#bebdbc;"></div>
<div class="t" style="left:77.3px;top:384.02px;line-height:20px;font-size:13.5px;color:#232629;letter-spacing:-0.312px;">Test Case Resources</div>
<svg style="left:223px;top:385px;" width="14" height="16" viewBox="0 0 14 16"><path d="M0.5 2.5H8L10.5 5V15.5H0.5Z" fill="url(#gDoc)" stroke="#c8bc98" stroke-width="1"/><g opacity="1"><path d="M9.6 0.6000000000000001L13.0 4L9.6 7.4L6.199999999999999 4Z" fill="#dcc05c" stroke="#b8962a" stroke-width="1" stroke-linejoin="round"/><path d="M9.6 1.9000000000000001V6.1000000000000005M7.499999999999999 4H11.7" stroke="#fffef4" stroke-width="1.05"/></g></svg>
<svg style="left:245.2px;top:391px;" width="10" height="6" viewBox="0 0 10 6"><path d="M0 0.2h10l-5 5z" fill="#232629"/></svg>
<svg style="left:265px;top:385px;" width="14" height="16" viewBox="0 0 14 16"><path d="M0.5 4.2Q0.5 2.5 2 2.5H7.15Q8.06 2.5 8.84 4H11.8Q12.5 4 12.5 5V11.5Q12.5 12.5 11.5 12.5H1.5Q0.5 12.5 0.5 11.5Z" fill="url(#gFold)" stroke="#d9953c" stroke-width="1"/><g opacity="1"><path d="M10.6 0.3999999999999999L14.0 3.8L10.6 7.199999999999999L7.199999999999999 3.8Z" fill="#dcc05c" stroke="#b8962a" stroke-width="1" stroke-linejoin="round"/><path d="M10.6 1.7V5.8999999999999995M8.5 3.8H12.7" stroke="#fffef4" stroke-width="1.05"/></g></svg>
<svg style="left:289px;top:391px;" width="10" height="6" viewBox="0 0 10 6"><path d="M0 0.2h10l-5 5z" fill="#232629"/></svg>
<div style="left:77px;top:411px;width:231px;height:119.5px;background:#e8e7e6;border:1px solid #b0afae;border-radius:4px 4px 0 0;"></div>
<div style="left:78px;top:412px;width:48px;height:23px;background:#efeeed;border-top:2px solid #b3b2b1;border-right:1px solid #b9b8b7;border-radius:3px 0 0 0;"></div>
<div class="t" style="left:81.6px;top:415.02px;line-height:20px;font-size:13.5px;color:#232629;letter-spacing:-0.144px;">Scripts</div>
<div style="left:190px;top:412px;width:1px;height:22px;background:#b9b8b7;"></div>
<div class="t" style="left:130.7px;top:415.02px;line-height:20px;font-size:13.5px;color:#232629;letter-spacing:-0.116px;">Test Data</div>
<div style="left:220px;top:412px;width:1px;height:22px;background:#b9b8b7;"></div>
<div class="t" style="left:195.5px;top:415.02px;line-height:20px;font-size:13.5px;color:#232629;letter-spacing:-1.683px;">VPs</div>
<div style="left:284px;top:412px;width:1px;height:22px;background:#b9b8b7;"></div>
<div class="t" style="left:225.6px;top:415.02px;line-height:20px;font-size:13.5px;color:#232629;letter-spacing:0.060px;">Gestures</div>
<div style="left:126px;top:434px;width:181px;height:1px;background:#b0afae;"></div>
<div style="left:80px;top:437px;width:225px;height:91.0px;background:#fff;border:1px solid #c2c1c0;"></div>
<svg style="left:100px;top:442px;" width="12" height="15" viewBox="0 0 12 15"><path d="M0.5 0.5H7.5L10.5 3.5V13.5H0.5Z" fill="#fbf8f2" stroke="none"/><path d="M0.5 13.5V0.5" fill="none" stroke="#8c8c8c" stroke-width="1"/><path d="M0.2 0.5H7.5L10.5 3.5V13.5H0.2" fill="none" stroke="#363636" stroke-width="1.1"/><path d="M7.5 0.5V3.5H10.5Z" fill="#d8d8d8" stroke="#3a3a3a" stroke-width=".8"/><path d="M2 3H4M2 5.6H4M5 6H6M2 8.6H4M7 8.6H8.5M2 11.6H6" stroke="#9a9a9a" stroke-width="1"/><rect x="6" y="10.8" width="4" height="1.8" fill="#2a3a8a"/><path d="M1.5 14.2H11.2V4" fill="none" stroke="#bbb" stroke-width=".8" opacity=".7"/></svg>
<div class="t" style="left:115.4px;top:441.62px;line-height:20px;font-size:13.5px;color:#232629;letter-spacing:0.386px;">test.py</div>
<div style="left:72px;top:536.2px;width:241px;height:1.5px;background:#bebdbc;"></div>
<div class="t" style="left:77.3px;top:546.82px;line-height:20px;font-size:13.5px;color:#232629;letter-spacing:-0.172px;">Test Suite Resources</div>
<svg style="left:223px;top:548px;" width="14" height="16" viewBox="0 0 14 16"><path d="M0.5 2.5H8L10.5 5V15.5H0.5Z" fill="url(#gDoc)" stroke="#c8bc98" stroke-width="1"/><g opacity="1"><path d="M9.6 0.6000000000000001L13.0 4L9.6 7.4L6.199999999999999 4Z" fill="#dcc05c" stroke="#b8962a" stroke-width="1" stroke-linejoin="round"/><path d="M9.6 1.9000000000000001V6.1000000000000005M7.499999999999999 4H11.7" stroke="#fffef4" stroke-width="1.05"/></g></svg>
<svg style="left:245.2px;top:554px;" width="10" height="6" viewBox="0 0 10 6"><path d="M0 0.2h10l-5 5z" fill="#232629"/></svg>
<svg style="left:265px;top:548px;" width="14" height="16" viewBox="0 0 14 16"><path d="M0.5 4.2Q0.5 2.5 2 2.5H7.15Q8.06 2.5 8.84 4H11.8Q12.5 4 12.5 5V11.5Q12.5 12.5 11.5 12.5H1.5Q0.5 12.5 0.5 11.5Z" fill="url(#gFold)" stroke="#d9953c" stroke-width="1"/><g opacity="1"><path d="M10.6 0.3999999999999999L14.0 3.8L10.6 7.199999999999999L7.199999999999999 3.8Z" fill="#dcc05c" stroke="#b8962a" stroke-width="1" stroke-linejoin="round"/><path d="M10.6 1.7V5.8999999999999995M8.5 3.8H12.7" stroke="#fffef4" stroke-width="1.05"/></g></svg>
<svg style="left:289px;top:554px;" width="10" height="6" viewBox="0 0 10 6"><path d="M0 0.2h10l-5 5z" fill="#232629"/></svg>
<div style="left:77px;top:574.4px;width:231px;height:121.6px;background:#e8e7e6;border:1px solid #b0afae;border-radius:4px 4px 0 0;"></div>
<div style="left:78px;top:575.4px;width:48px;height:27px;background:#efeeed;border-top:2px solid #b3b2b1;border-right:1px solid #b9b8b7;border-radius:3px 0 0 0;"></div>
<div class="t" style="left:81.6px;top:580.02px;line-height:20px;font-size:13.5px;color:#232629;letter-spacing:-0.144px;">Scripts</div>
<div style="left:178px;top:575.4px;width:1px;height:26px;background:#b9b8b7;"></div>
<div class="t" style="left:130.7px;top:580.02px;line-height:20px;font-size:13.5px;color:#232629;letter-spacing:0.154px;">Models</div>
<div style="left:243px;top:575.4px;width:1px;height:26px;background:#b9b8b7;"></div>
<div class="t" style="left:183.7px;top:580.02px;line-height:20px;font-size:13.5px;color:#232629;letter-spacing:-0.066px;">Test Data</div>
<div style="left:126px;top:601.4px;width:181px;height:1px;background:#b0afae;"></div>
<div style="left:80px;top:604.4px;width:225px;height:89.1px;background:#fff;border:1px solid #c2c1c0;"></div>
<svg style="left:255px;top:582px;" width="9" height="5" viewBox="0 0 9 5"><path d="M0.2 0H1.8L4 2.5L1.8 5H0.2L2 2.5Z M4.2 0H5.8L8.2 2.5L5.8 5H4.2L6 2.5Z" fill="#2a2e32"/></svg>
<div class="t" style="left:262.3px;top:582.44px;line-height:20px;font-size:10px;color:#232629;">2</div>
<svg style="left:97.5px;top:609.2px;" width="16" height="14" viewBox="0 0 16 14"><path d="M0.7 3.6Q0.7 1.1 3 1.1H6Q7.2 1.1 7.6 2.8H12.2Q14.4 2.8 14.4 5V11Q14.4 13.2 12.2 13.2H3Q.7 13.2 .7 11Z" fill="url(#gFold)" stroke="#e8b672" stroke-width="1"/><path d="M2 3.4H6.2" stroke="#fdf2d4" stroke-width="1.1"/></svg>
<div class="t" style="left:117.6px;top:609.02px;line-height:20px;font-size:13.5px;color:#232629;letter-spacing:-0.693px;">__pycache__</div>
<svg style="left:97px;top:633px;" width="17" height="18" viewBox="0 0 17 18"><g transform="translate(4.5,0)"><path d="M0.5 0.5H7.5L11 4V15H0.5Z" fill="#fbf6ee" stroke="#303030" stroke-width="1.1"/><path d="M7.5 0.5V4H11Z" fill="#e8e8e8" stroke="#303030" stroke-width=".8"/><path d="M2 3.4H3.2M2 6.4H3.2M5 6.4H6.2M2 9.4H3.2M8 9.4H9.2M2 12.4H3.2M5 12.4H6.2M8 12.4H9.2" stroke="#8a8a8a" stroke-width="1.2"/><path d="M1.5 15.7H11.7V5" fill="none" stroke="#999" stroke-width=".8" opacity=".7"/></g><path d="M3.4 10.4L6.6 16.6H0.3Z" fill="#f8c048" stroke="#e0982a" stroke-width=".9" stroke-linejoin="round"/><path d="M3.4 12.4V14.4M3.4 15.2V15.9" stroke="#4a3a1a" stroke-width="1"/></svg>
<div class="t" style="left:117.6px;top:634.02px;line-height:20px;font-size:13.5px;color:#232629;letter-spacing:0.053px;">names.py</div>
<div style="left:323px;top:140px;width:848px;height:211px;background:#fff;border:1px solid #d3cecb;"></div>
<div style="left:324px;top:141px;width:846px;height:27px;background:#e2dfdc;"></div>
<div style="left:324px;top:168px;width:846px;height:1px;background:#d0cecc;"></div>
<div style="left:324px;top:141px;width:180.5px;height:28px;background:#fff;border-right:1px solid #d4d0cc;"></div>
<svg style="left:331px;top:148px;" width="11" height="14" viewBox="0 0 11 14"><path d="M0.6 0.6H7.4L10.4 3.6V13.4H0.6Z" fill="#fff" stroke="#5e7e30" stroke-width="1.2" stroke-dasharray="1.6 .8"/><path d="M0.6 0.6H7.4L10.4 3.6V13.4H0.6Z" fill="none" stroke="#5e7e30" stroke-width="1.2" opacity=".55"/><path d="M7.4 0.8V3.6H10.2" fill="#f4c8c8" stroke="#5e7e30" stroke-width=".9"/><text x="2" y="11" font-family="Liberation Sans" font-weight="bold" font-size="9.5" fill="#1cb84c">P</text></svg>
<div class="t" style="left:347.9px;top:146.52px;line-height:20px;font-size:13.5px;color:#232629;letter-spacing:0.046px;">tst_general (suite_py)</div>
<svg style="left:487px;top:150.6px;" width="10" height="10" viewBox="0 0 10 10"><path d="M0.6 0.6L9 9M9 0.6L0.6 9" fill="none" stroke="#2a2e32" stroke-width="1.25"/></svg>
<svg style="left:1126px;top:150px;" width="10" height="5" viewBox="0 0 10 5"><rect x="-1" y="-1" width="12" height="6" fill="#fff" opacity=".6" rx="1"/><rect x="0.5" y="0.5" width="9" height="3" fill="#fff" stroke="#1f2226" stroke-width="1"/></svg>
<svg style="left:1148px;top:150px;" width="10" height="10" viewBox="0 0 10 10"><rect x="-1" y="-1" width="12" height="12" fill="#fff" opacity=".6" rx="1"/><rect x="0.5" y="0.5" width="9" height="9" fill="none" stroke="#1f2226" stroke-width="1"/><rect x="1" y="1" width="8" height="1" fill="#fff"/><rect x="1" y="2" width="8" height="1" fill="#1f2226"/><rect x="1.5" y="3.5" width="7" height="5" fill="none" stroke="#fff" stroke-width="1"/></svg>
<div style="left:324px;top:169px;width:12px;height:181px;background:#f7f6f5;"></div>
<div style="left:361px;top:169px;width:1px;height:166px;background:#f1f1f1;"></div>
<div style="left:336px;top:169px;width:808px;height:166px;overflow:hidden;" id="code">
<div style="left:28px;top:115.19999999999999px;width:780px;height:17px;background:#e8f2fe;"></div>
<div class="ln" style="top:-3.8px">33</div><div class="cl" style="top:-3.8px">    activateItem(waitForObjectItem(names.<span class="hl">address_Book_MyAddresses_adr_JMenuBar</span>, <span class="st">&quot;Edit&quot;</span>))</div>
<div class="ln" style="top:13.2px">34</div><div class="cl" style="top:13.2px">    activateItem(waitForObjectItem(names.edit_JMenu, <span class="st">&quot;Remove...&quot;</span>))</div>
<div class="ln" style="top:30.2px">35</div><div class="cl" style="top:30.2px">    clickButton(waitForObject(names.address_Book_Remove_Yes_JButton))</div>
<div class="ln" style="top:47.2px">36</div><div class="cl" style="top:47.2px">    test.compare(waitForObjectExists(names.jane_TableItemProxy).text, <span class="st">&quot;<span class="sq">Jane</span>&quot;</span>)</div>
<div class="ln" style="top:64.2px">37</div><div class="cl" style="top:64.2px">    test.compare(waitForObjectExists(names.doe_TableItemProxy).text, <span class="st">&quot;<span class="sq">Doe</span>&quot;</span>)</div>
<div class="ln" style="top:81.2px">38</div><div class="cl" style="top:81.2px">    test.compare(waitForObjectExists(names.jane_doe_nowhere_com_TableItemProxy).text, <span class="st">&quot;jane.doe@nowhere.com&quot;</span>)</div>
<div class="ln" style="top:98.2px">39</div><div class="cl" style="top:98.2px">    test.compare(waitForObjectExists(names.o555_123_4567_TableItemProxy).text, <span class="st">&quot;555 123 4567&quot;</span>)</div>
<div class="ln" style="top:115.2px">40</div><div class="cl" style="top:115.2px">    activateItem(waitForObjectItem(names.<span class="hl">address_Book_MyAddresses_adr_JMenuBar</span>, <span class="st">&quot;File&quot;</span>))</div>
<div class="ln" style="top:132.2px">41</div><div class="cl" style="top:132.2px">    activateItem(waitForObjectItem(names.file_JMenu_2, <span class="st">&quot;Quit&quot;</span>))</div>
<div class="ln" style="top:149.2px">42</div><div class="cl" style="top:149.2px">    clickButton(waitForObject(names.address_Book_No_JButton))</div>
<div class="ln" style="top:166.2px">43</div><div class="cl" style="top:166.2px"></div>
<div style="left:396px;top:115.19999999999999px;width:2px;height:17px;background:#10106a;"></div>
</div>
<style>
.ln{left:0;width:15.6px;text-align:right;font:13.33px/17px "Liberation Mono",monospace;color:#787878;height:17px;}
.cl{left:28.1px;font:13.33px/17px "Liberation Mono",monospace;color:#000;white-space:pre;height:17px;}
.cl span{position:static}
.hl{background:#ffff9c;display:inline-block;height:17px;}
.st{color:#00aa00;font-style:italic;}
.sq{padding-bottom:1px;background:repeating-linear-gradient(90deg,#f29a7c 0 1.2px,transparent 1.2px 2.4px) 0 calc(100% - 1px)/100% 1px no-repeat,repeating-linear-gradient(90deg,transparent 0 1.2px,#f29a7c 1.2px 2.4px) 0 100%/100% 1px no-repeat;}
</style>
<div class="ln" style="left:336px;top:335.2px">43</div>
<div style="left:362px;top:334px;width:782px;height:16px;background:#eceef1;"></div>
<div style="left:367px;top:338px;width:681px;height:8px;background:#e9ebee;border-radius:4px;border:1px solid #e4e6ea;"></div>
<div style="left:1144px;top:325px;width:26px;height:25px;background:#f4f3f1;"></div>
<div style="left:1144px;top:170px;width:2px;height:155px;background:#e3e3e3;"></div>
<div style="left:1146px;top:187px;width:22px;height:5px;background:#ffffc8;border:1px solid #fdf9a0;"></div>
<div style="left:1144px;top:219px;width:25px;height:18px;background:#e8f2fe;border:1px solid #3b8cf0;"></div>
<div style="left:1146px;top:219px;width:22px;height:4px;background:#ffffc8;border:1px solid #fdf9a0;"></div>
<div style="left:1146px;top:229px;width:22px;height:5px;background:#ffffc8;border:1px solid #fdf9a0;"></div>
<div style="left:323px;top:355px;width:848px;height:352px;background:#fff;border:1px solid #d3cecb;"></div>
<div style="left:324px;top:356px;width:846px;height:27px;background:#e8e7e6;"></div>
<div style="left:324px;top:383px;width:846px;height:1px;background:#d0cecc;"></div>
<div style="left:324px;top:356px;width:122px;height:28px;background:#f5f4f3;border-right:1px solid #d3cecb;"></div>
<div style="left:324px;top:384px;width:846px;height:29px;background:#f5f4f3;"></div>
<svg style="left:328px;top:362px;" width="16" height="17" viewBox="0 0 16 17"><rect x="2.6" y="2.4" width="11.2" height="12.2" fill="url(#gDoc)"/><path d="M2.8 2.4V11M13.6 2.4V14.6H12.6" fill="none" stroke="#b4a264" stroke-width="1.1"/><rect x="1" y="0" width="14" height="2.7" fill="#7b90c8"/><path d="M4.2 4.5H7" stroke="#0aa80a" stroke-width="1.3"/><path d="M4.2 7.4H7.4" stroke="#ff1a1a" stroke-width="1.3"/><path d="M8.2 4.5H12M9 7.4H12M8.2 10.4H12M9 13.3H12" stroke="#7a90c8" stroke-width="1.1"/><rect x="0" y="8" width="7.2" height="7.8" fill="#0a9c44"/><path d="M1.5 11.6L3.4 14L6 9.4" fill="none" stroke="#fff" stroke-width="1.6"/></svg>
<div class="t" style="left:348.2px;top:361.62px;line-height:20px;font-size:13.5px;color:#232629;letter-spacing:-0.176px;">Test Results</div>
<svg style="left:428px;top:366px;" width="10" height="10" viewBox="0 0 10 10"><path d="M0.6 0.6L9 9M9 0.6L0.6 9" fill="none" stroke="#2a2e32" stroke-width="1.25"/></svg>
<svg style="left:450px;top:362px;" width="16" height="16" viewBox="0 0 16 16"><rect x="1.6" y="2.4" width="11" height="12" fill="#f4f6fc" stroke="#9a7a2a" stroke-width="1.2"/><rect x="0" y="0.2" width="14" height="2.2" fill="#8c9fd2"/><path d="M3.4 3.8H11M7.2 5.6H11M7.2 7.6H10" stroke="#6a80c0" stroke-width="1"/><rect x="3" y="5.1" width="2.9" height="2.8" fill="#ff1414"/><rect x="3" y="9.1" width="2.9" height="2.8" fill="#0aa00a"/><circle cx="11" cy="11.8" r="3.5" fill="#f4fafc" stroke="#1a5aa0" stroke-width="1.3"/><path d="M10.6 9.8V12L11.8 13.4" fill="none" stroke="#1a5aa0" stroke-width="1"/></svg>
<div class="t" style="left:469.1px;top:361.62px;line-height:20px;font-size:13.5px;color:#232629;letter-spacing:0.047px;">Test Summary</div>
<svg style="left:565px;top:362px;" width="16" height="16" viewBox="0 0 16 16"><rect x="0.8" y="1" width="10" height="11.4" fill="#ecf8fc"/><path d="M0.8 0.6H10.9V7" fill="none" stroke="#c8b264" stroke-width="1.2"/><path d="M1 12.6H7" stroke="#a8a8a0" stroke-width=".9"/><g fill="#4a80c0"><rect x="0.4" y="2" width="1.2" height="1.1"/><rect x="0.4" y="4" width="1.2" height="1.1"/><rect x="0.4" y="6" width="1.2" height="1.1"/><rect x="0.4" y="8" width="1.2" height="1.1"/><rect x="0.4" y="10" width="1.2" height="1.1"/></g><g fill="#1a2a5a"><rect x="2.4" y="2" width="1.2" height="1.1"/><rect x="2.4" y="4" width="1.2" height="1.1"/><rect x="2.4" y="6" width="1.2" height="1.1"/><rect x="2.4" y="8" width="1.2" height="1.1"/><rect x="2.4" y="10" width="1.2" height="1.1"/></g><path d="M4.4 3.4H9M4.4 5.4H9M4.4 7.4H7.4M4.4 9.4H7" stroke="#8a9ad0" stroke-width="1"/><g stroke="#142a1a" stroke-width="1" stroke-linecap="round"><path d="M8 7.4H9.6M7.2 9.6L8.8 10M9.6 13.6L8.8 15M10.4 6.6L11 8.2M13.4 7L14.6 7.6M13.8 10.2L15.2 11.2M7.6 12.4L8.8 11.6"/></g><ellipse cx="11.3" cy="10.4" rx="2.9" ry="2.5" fill="#b8e84a" stroke="#2a8a9a" stroke-width="1"/><circle cx="11.4" cy="10.5" r=".9" fill="#2a8a3a"/></svg>
<div class="t" style="left:585.7px;top:361.62px;line-height:20px;font-size:13.5px;color:#232629;letter-spacing:0.264px;">Runner/Server Log</div>
<svg style="left:715px;top:364px;" width="12" height="13" viewBox="0 0 12 13"><rect x="0.6" y="0.6" width="10.8" height="11.2" fill="#f2f8ff" stroke="#a88e4a" stroke-width="1.2"/><rect x="0" y="0" width="12" height="2.9" fill="#3a7cc4"/><rect x="1" y="1" width="10" height=".9" fill="#9acaf0"/></svg>
<div class="t" style="left:733px;top:361.62px;line-height:20px;font-size:13.5px;color:#232629;letter-spacing:0.177px;">Test Description</div>
<svg style="left:1126px;top:365px;" width="10" height="5" viewBox="0 0 10 5"><rect x="-1" y="-1" width="12" height="6" fill="#fff" opacity=".6" rx="1"/><rect x="0.5" y="0.5" width="9" height="3" fill="#fff" stroke="#1f2226" stroke-width="1"/></svg>
<svg style="left:1148px;top:365px;" width="10" height="10" viewBox="0 0 10 10"><rect x="-1" y="-1" width="12" height="12" fill="#fff" opacity=".6" rx="1"/><rect x="0.5" y="0.5" width="9" height="9" fill="none" stroke="#1f2226" stroke-width="1"/><rect x="1" y="1" width="8" height="1" fill="#fff"/><rect x="1" y="2" width="8" height="1" fill="#1f2226"/><rect x="1.5" y="3.5" width="7" height="5" fill="none" stroke="#fff" stroke-width="1"/></svg>
<div class="t" style="left:646.3px;top:390.02px;line-height:20px;font-size:13.5px;color:#232629;letter-spacing:-0.128px;">Recent Test Results</div>
<svg style="left:779.5px;top:395px;" width="10" height="6" viewBox="0 0 10 6"><path d="M0 0.2h10l-5 5z" fill="#232629"/></svg>
<div style="left:798px;top:386px;width:1.2px;height:25px;background:#c9c8c7;"></div>
<div style="left:849.3px;top:386px;width:1.2px;height:25px;background:#c9c8c7;"></div>
<div style="left:900px;top:386px;width:1.2px;height:25px;background:#c9c8c7;"></div>
<div style="left:951px;top:386px;width:1.2px;height:25px;background:#c9c8c7;"></div>
<div style="left:1002px;top:386px;width:1.2px;height:25px;background:#c9c8c7;"></div>
<svg style="left:806px;top:390px;" width="14" height="15" viewBox="0 0 14 15"><path d="M7.0 14.4L1.7 8.7H4.24V2.6Q4.24 1.6 5.24 1.6H8.76Q9.76 1.6 9.76 2.6V8.7H12.3Z" fill="url(#gArr)" stroke="#c0861a" stroke-width="1.3" stroke-linejoin="round" opacity="1"/></svg>
<svg style="left:828px;top:390px;" width="14" height="15" viewBox="0 0 14 15"><path d="M7.0 1.6L1.7 7.3H4.24V13.4Q4.24 14.4 5.24 14.4H8.76Q9.76 14.4 9.76 13.4V7.3H12.3Z" fill="url(#gArr)" stroke="#c0861a" stroke-width="1.3" stroke-linejoin="round" opacity="1"/></svg>
<svg style="left:858px;top:391px;" width="14" height="14" viewBox="0 0 14 14"><rect x="0.5" y="1.5" width="10" height="10" fill="#d4e8f8" stroke="#96a0c0" stroke-width="1"/><rect x="2.5" y="3.5" width="10.5" height="10" fill="url(#gSq)" stroke="#8a94b4" stroke-width="1"/><path d="M4.4 8.6H11.2M7.8 5.2V12" stroke="#0a3a7a" stroke-width="1.3"/></svg>
<svg style="left:880px;top:391px;" width="14" height="14" viewBox="0 0 14 14"><rect x="0.5" y="1.5" width="10" height="10" fill="#d4e8f8" stroke="#96a0c0" stroke-width="1"/><rect x="2.5" y="3.5" width="10.5" height="10" fill="url(#gSq)" stroke="#8a94b4" stroke-width="1"/><path d="M4.4 8.6H11.2" stroke="#0a3a7a" stroke-width="1.3"/></svg>
<svg style="left:907px;top:390px;" width="16" height="16" viewBox="0 0 16 16"><path d="M0.6 6H2.4M0.6 13H2.4M1.5 6V13" stroke="#555" stroke-width=".9"/><rect x="3.6" y="1.6" width="12" height="12" fill="#fff" stroke="#8a8a8a" stroke-width="1"/><path d="M4 14H16V2" fill="none" stroke="#5a5a5a" stroke-width="1"/><rect x="5.2" y="3.2" width="9" height="9" fill="#6aa8e0"/><rect x="5.2" y="9.6" width="9" height="2.6" fill="#5aa84a"/><path d="M5.6 10.4Q6.6 6.6 9 7.6Q11.6 7.4 11.2 10.2Z" fill="#a8a8a8"/><circle cx="12" cy="5.4" r="1.3" fill="#cfe4f8"/></svg>
<svg style="left:929px;top:390px;" width="16" height="16" viewBox="0 0 16 16"><rect x="0" y="1.4" width="16" height="14" fill="#e4f0fc"/><rect x="0" y="1.4" width="16" height="3.6" fill="#a4acbc"/><rect x="0" y="11.8" width="16" height="3.6" fill="#a4acbc"/><g fill="#fff"><rect x="1.4" y="2.3" width="2" height="1.8"/><rect x="7" y="2.3" width="2" height="1.8"/><rect x="12.6" y="2.3" width="2" height="1.8"/><rect x="1.4" y="12.7" width="2" height="1.8"/><rect x="7" y="12.7" width="2" height="1.8"/><rect x="12.6" y="12.7" width="2" height="1.8"/></g><path d="M3 5V11.8M13 5V11.8" stroke="#b4bccc" stroke-width="1"/><path d="M8.0 10.4L3.9000000000000004 6.14H5.792V1.8Q5.792 0.8 6.792 0.8H9.208Q10.208 0.8 10.208 1.8V6.14H12.100000000000001Z" fill="#fdf4dc" stroke="#d8b060" stroke-width="1.3" stroke-linejoin="round" opacity="1"/></svg>
<svg style="left:958px;top:390px;" width="16" height="16" viewBox="0 0 16 16"><path d="M5 0.8H11L15.2 5V11L11 15.2H5L0.8 11V5Z" fill="#f49898" stroke="#f0b4b4" stroke-width="1"/><path d="M4.6 4.6L6.8 6.8M9 6.4L11.4 4" stroke="#fbe0e0" stroke-width="1.5"/><path d="M4 8.2L7.4 14.6L15.4 6.4L15 9.6L7.6 15.6L4.6 12Z" fill="#4ac85a"/><path d="M4 8L7.4 13L15 6.4" fill="none" stroke="#3cbc4e" stroke-width="2.4"/></svg>
<svg style="left:981px;top:390px;" width="16" height="16" viewBox="0 0 16 16"><g opacity=".8"><rect x="1.5" y="2.5" width="10" height="10" fill="#f2f4f8" stroke="#b4b8c8" stroke-width="1"/><rect x="3" y="4" width="7" height="6" fill="url(#gImg)"/></g><g opacity="0.95"><path d="M10.8 1.1000000000000005L14.100000000000001 4.4L10.8 7.7L7.500000000000001 4.4Z" fill="#ecdfb4" stroke="#e4d4a0" stroke-width="1" stroke-linejoin="round"/><path d="M10.8 2.4000000000000004V6.4M8.8 4.4H12.8" stroke="#fffef4" stroke-width="1.05"/></g></svg>
<svg style="left:1009px;top:390px;" width="14" height="15" viewBox="0 0 14 15"><path d="M0.8 1.6H13.2L8.6 7.2V12.4L5.4 14.4V7.2Z" fill="url(#gSq)" stroke="#4a7cc4" stroke-width="1.2" stroke-linejoin="round"/></svg>
<svg style="left:1034px;top:395px;" width="10" height="6" viewBox="0 0 10 6"><path d="M0 0.2h10l-5 5z" fill="#232629"/></svg>
<svg style="left:1054px;top:390px;" width="15" height="15" viewBox="0 0 15 15"><path d="M1.6 11.2L6 2.4Q6.6 1.4 7.8 1.6L11.4 2.2L6.6 12.2H2.4Q1.2 12.2 1.6 11.2Z" fill="#f2eee6" stroke="#d8d0c0" stroke-width="1"/><path d="M6.6 12.4H13.4" stroke="#d8c8b0" stroke-width="1"/></svg>
<svg style="left:1075px;top:390px;" width="15" height="15" viewBox="0 0 15 15"><g opacity=".55"><path d="M1 7V13H15V7H12.4V10.4H3.6V7Z" fill="#b8cce8" stroke="#7a9ad0" stroke-width="1"/><path d="M5.4 8.6L12.6 1.4M9 1.2H12.8V5" fill="none" stroke="#6aa8d8" stroke-width="1.2"/></g></svg>
<svg style="left:1097px;top:390px;" width="15" height="15" viewBox="0 0 15 15"><path d="M1 7V13H15V7H12.4V10.4H3.6V7Z" fill="#b4c4e8" stroke="#4a68b0" stroke-width="1"/><path d="M1.4 12H14.6" stroke="#5a78bc" stroke-width="1.6"/><path d="M3 1.4L10 8.4M6.4 8.8H10.4V4.8" fill="none" stroke="#2a8ab0" stroke-width="1.2"/></svg>
<svg style="left:1120px;top:390px;" width="15" height="15" viewBox="0 0 15 15"><path d="M8 2.6H2.6Q1 2.6 1 4.2V10.8Q1 12.4 2.6 12.4H9.4Q11 12.4 11 10.8V7.6" fill="none" stroke="#555" stroke-width="1.3"/><path d="M6.4 7.6L13 1" stroke="#666" stroke-width="1.6"/><path d="M8.6 0.6H13.8V5.8Z" fill="#666"/></svg>
<svg style="left:1153.3px;top:390px;" width="6" height="15" viewBox="0 0 6 15"><circle cx="3" cy="2.4" r="1.7" fill="#fff" stroke="#3a3a3a" stroke-width="1"/><circle cx="3" cy="7.5" r="1.7" fill="#fff" stroke="#3a3a3a" stroke-width="1"/><circle cx="3" cy="12.6" r="1.7" fill="#fff" stroke="#3a3a3a" stroke-width="1"/></svg>
<div style="left:324px;top:413px;width:846px;height:27px;background:#fafafa;"></div>
<div style="left:324px;top:440px;width:846px;height:1px;background:#c8c7c6;"></div>
<div style="left:492px;top:413px;width:1px;height:27px;background:#c8c7c6;"></div>
<div class="t" style="left:328.3px;top:417.82px;line-height:20px;font-size:13.5px;color:#232629;letter-spacing:-0.213px;">Result</div>
<div class="t" style="left:497.3px;top:417.82px;line-height:20px;font-size:13.5px;color:#232629;letter-spacing:-0.114px;">Message</div>
<div style="left:324px;top:591px;width:846px;height:25px;background:#c4e5f9;"></div>
<svg style="left:326px;top:451px;" width="12" height="7" viewBox="0 0 12 7"><path d="M0.6 0.6L6 5.6L11.4 0.6" fill="none" stroke="#34383c" stroke-width="1.25"/></svg>
<div class="t" style="left:345.3px;top:445.02px;line-height:20px;font-size:13.5px;color:#0a8c0a;letter-spacing:-0.079px;">TestSuite</div>
<div class="t" style="left:498.5px;top:445.02px;line-height:20px;font-size:13.5px;color:#0a8c0a;letter-spacing:-0.042px;">suite_py</div>
<svg style="left:341px;top:476px;" width="12" height="7" viewBox="0 0 12 7"><path d="M0.6 0.6L6 5.6L11.4 0.6" fill="none" stroke="#34383c" stroke-width="1.25"/></svg>
<div class="t" style="left:360.3px;top:470.02px;line-height:20px;font-size:13.5px;color:#0a8c0a;letter-spacing:-0.469px;">TestCase</div>
<div class="t" style="left:498.5px;top:470.02px;line-height:20px;font-size:13.5px;color:#0a8c0a;letter-spacing:0.240px;">tst_general</div>
<svg style="left:356px;top:501px;" width="12" height="7" viewBox="0 0 12 7"><path d="M0.6 0.6L6 5.6L11.4 0.6" fill="none" stroke="#34383c" stroke-width="1.25"/></svg>
<div class="t" style="left:375.3px;top:495.02px;line-height:20px;font-size:13.5px;color:#0a8c0a;letter-spacing:-1.172px;">Pass</div>
<div class="t" style="left:498.5px;top:495.02px;line-height:20px;font-size:13.5px;color:#0a8c0a;letter-spacing:0.035px;">Comparison</div>
<div class="t" style="left:390.6px;top:520.02px;line-height:20px;font-size:13.5px;color:#232629;letter-spacing:0.157px;">Detail</div>
<div class="t" style="left:498.5px;top:520.02px;line-height:20px;font-size:13.5px;color:#232629;letter-spacing:-0.259px;">&#x27;Jane&#x27; and &#x27;Jane&#x27; are equal</div>
<svg style="left:356px;top:551px;" width="12" height="7" viewBox="0 0 12 7"><path d="M0.6 0.6L6 5.6L11.4 0.6" fill="none" stroke="#34383c" stroke-width="1.25"/></svg>
<div class="t" style="left:375.3px;top:545.02px;line-height:20px;font-size:13.5px;color:#0a8c0a;letter-spacing:-1.172px;">Pass</div>
<div class="t" style="left:498.5px;top:545.02px;line-height:20px;font-size:13.5px;color:#0a8c0a;letter-spacing:0.035px;">Comparison</div>
<div class="t" style="left:390.6px;top:570.02px;line-height:20px;font-size:13.5px;color:#232629;letter-spacing:0.157px;">Detail</div>
<div class="t" style="left:498.5px;top:570.02px;line-height:20px;font-size:13.5px;color:#232629;letter-spacing:0.020px;">&#x27;Doe&#x27; and &#x27;Doe&#x27; are equal</div>
<svg style="left:356px;top:601px;" width="12" height="7" viewBox="0 0 12 7"><path d="M0.6 0.6L6 5.6L11.4 0.6" fill="none" stroke="#34383c" stroke-width="1.25"/></svg>
<div class="t" style="left:375.3px;top:595.02px;line-height:20px;font-size:13.5px;color:#0a8c0a;letter-spacing:-1.172px;">Pass</div>
<div class="t" style="left:498.5px;top:595.02px;line-height:20px;font-size:13.5px;color:#0a8c0a;letter-spacing:0.035px;">Comparison</div>
<div class="t" style="left:390.6px;top:620.02px;line-height:20px;font-size:13.5px;color:#232629;letter-spacing:0.157px;">Detail</div>
<div class="t" style="left:498.5px;top:620.02px;line-height:20px;font-size:13.5px;color:#232629;letter-spacing:0.156px;">&#x27;jane.doe@nowhere.com&#x27; and &#x27;jane.doe@nowhere.com&#x27; are equal</div>
<svg style="left:356px;top:651px;" width="12" height="7" viewBox="0 0 12 7"><path d="M0.6 0.6L6 5.6L11.4 0.6" fill="none" stroke="#34383c" stroke-width="1.25"/></svg>
<div class="t" style="left:375.3px;top:645.02px;line-height:20px;font-size:13.5px;color:#0a8c0a;letter-spacing:-1.172px;">Pass</div>
<div class="t" style="left:498.5px;top:645.02px;line-height:20px;font-size:13.5px;color:#0a8c0a;letter-spacing:0.035px;">Comparison</div>
<div class="t" style="left:390.6px;top:670.02px;line-height:20px;font-size:13.5px;color:#232629;letter-spacing:0.157px;">Detail</div>
<div class="t" style="left:498.5px;top:670.02px;line-height:20px;font-size:13.5px;color:#232629;letter-spacing:0.161px;">&#x27;555 123 4567&#x27; and &#x27;555 123 4567&#x27; are equal</div>
<div style="left:328px;top:694px;width:585px;height:8px;background:#d6d8db;border:1px solid #9ea0a4;border-radius:4px;"></div>
<svg style="left:544px;top:612px;" width="14" height="22" viewBox="0 0 14 22"><path d="M1 0.2V17L4.6 13.8L6.8 18.9L9.2 17.9L7 12.7L12.8 12.1Z" fill="#000" stroke="#fff" stroke-width="1.6" stroke-linejoin="round" paint-order="stroke"/></svg>
<div style="left:66px;top:707px;width:1105px;height:26px;background:#f5f4f3;"></div>
<div style="left:500.8px;top:707px;width:1px;height:22px;background:#c8c7c6;"></div>
<div style="left:634px;top:707px;width:1px;height:22px;background:#c8c7c6;"></div>
<div style="left:761px;top:707px;width:1px;height:22px;background:#c8c7c6;"></div>
<div class="t" style="left:508.4px;top:709.02px;line-height:20px;font-size:13.5px;color:#232629;letter-spacing:0.174px;">Writable</div>
<div class="t" style="left:641px;top:709.02px;line-height:20px;font-size:13.5px;color:#232629;letter-spacing:0.847px;">Insert</div>
<div class="t" style="left:767.8px;top:709.02px;line-height:20px;font-size:13.5px;color:#232629;letter-spacing:0.079px;">40 : 47 : 2810</div>
<div style="left:886px;top:713px;width:2px;height:2px;background:#ada294;box-shadow:1px 1px 0 #fbfaf9;"></div>
<div style="left:886px;top:717px;width:2px;height:2px;background:#ada294;box-shadow:1px 1px 0 #fbfaf9;"></div>
<div style="left:886px;top:721px;width:2px;height:2px;background:#ada294;box-shadow:1px 1px 0 #fbfaf9;"></div>
<div style="left:886px;top:725px;width:2px;height:2px;background:#ada294;box-shadow:1px 1px 0 #fbfaf9;"></div>
</body></html>
